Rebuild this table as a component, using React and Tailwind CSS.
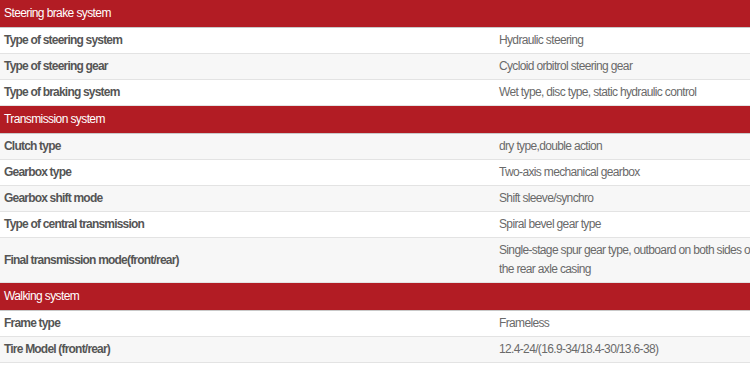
const sections = [
  {
    title: 'Steering brake system',
    rows: [
      ['Type of steering system', 'Hydraulic steering'],
      ['Type of steering gear', 'Cycloid orbitrol steering gear'],
      ['Type of braking system', 'Wet type, disc type, static hydraulic control'],
    ],
  },
  {
    title: 'Transmission system',
    rows: [
      ['Clutch type', 'dry type,double action'],
      ['Gearbox type', 'Two-axis mechanical gearbox'],
      ['Gearbox shift mode', 'Shift sleeve/synchro'],
      ['Type of central transmission', 'Spiral bevel gear type'],
      ['Final transmission mode(front/rear)', 'Single-stage spur gear type, outboard on both sides of the rear axle casing'],
    ],
  },
  {
    title: 'Walking system',
    rows: [
      ['Frame type', 'Frameless'],
      ['Tire Model (front/rear)', '12.4-24/(16.9-34/18.4-30/13.6-38)'],
    ],
  },
];

function SectionHeader({ title }) {
  return (
    <div className="bg-[#b21c24] text-white text-[12px] tracking-[-0.6px] leading-[19px] pt-[4px] pb-[4px] pl-[4px] border-b border-[#c9c9c9]">
      {title}
    </div>
  );
}

function SpecRow({ label, value, shaded }) {
  return (
    <div className={`flex border-b border-[#e3e3e3] ${shaded ? 'bg-[#f7f7f7]' : 'bg-white'}`}>
      <div className="w-[495px] shrink-0 flex items-center pl-[4px] py-[3px] text-[12px] leading-[19px] font-bold text-[#555555] tracking-[-0.8px]">
        {label}
      </div>
      <div className="w-[268px] shrink-0 pl-[4px] py-[3px] text-[12px] leading-[19px] text-[#6a6a6a] tracking-[-0.65px]">
        {value}
      </div>
    </div>
  );
}

export default function App() {
  let n = 0;
  return (
    <div className="w-[750px] h-[366px] overflow-hidden bg-white font-['Liberation_Sans',Arial,sans-serif]">
      <div className="w-[763px]">
        {sections.map((s) => (
          <div key={s.title}>
            <SectionHeader title={s.title} />
            {s.rows.map(([label, value], i) => {
              n += 1;
              return <SpecRow key={label} label={label} value={value} shaded={n % 2 === 0} />;
            })}
          </div>
        ))}
      </div>
    </div>
  );
}
